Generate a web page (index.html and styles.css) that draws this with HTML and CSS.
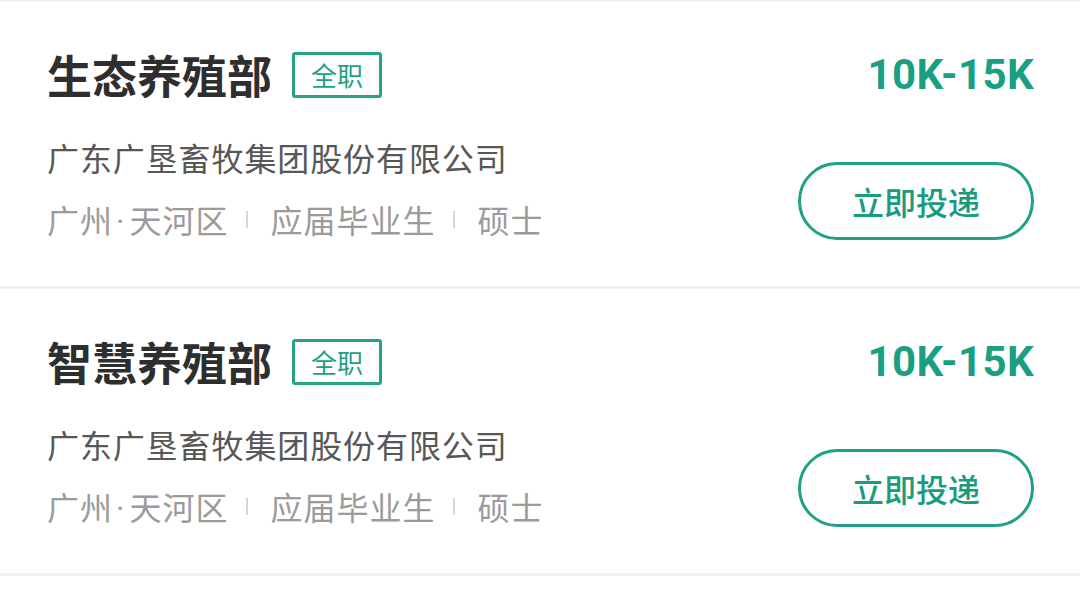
FILE: index.html
```html
<!DOCTYPE html>
<html lang="zh-CN">
<head>
    <meta charset="UTF-8">
    <title>职位列表</title>
    <link rel="stylesheet" href="styles.css">
</head>
<body>
    <!-- 职位列表 -->
    <div class="job-list">
        <div class="job-card">
            <div class="job-info">
                <div class="title-row">
                    <span class="job-title">生态养殖部</span>
                    <span class="job-tag">全职</span>
                </div>
                <p class="company">广东广垦畜牧集团股份有限公司</p>
                <p class="meta">
                    <span>广州<b class="dot">·</b>天河区</span>
                    <i class="divider"></i>
                    <span>应届毕业生</span>
                    <i class="divider"></i>
                    <span>硕士</span>
                </p>
            </div>
            <div class="job-side">
                <span class="salary">10K-15K</span>
                <button class="apply-btn">立即投递</button>
            </div>
        </div>

        <div class="job-card">
            <div class="job-info">
                <div class="title-row">
                    <span class="job-title">智慧养殖部</span>
                    <span class="job-tag">全职</span>
                </div>
                <p class="company">广东广垦畜牧集团股份有限公司</p>
                <p class="meta">
                    <span>广州<b class="dot">·</b>天河区</span>
                    <i class="divider"></i>
                    <span>应届毕业生</span>
                    <i class="divider"></i>
                    <span>硕士</span>
                </p>
            </div>
            <div class="job-side">
                <span class="salary">10K-15K</span>
                <button class="apply-btn">立即投递</button>
            </div>
        </div>
    </div>
</body>
</html>
```

FILE: styles.css
```css
body {
    margin: 0;
    background-color: #fff;
    font-family: "Noto Sans CJK SC", "Noto Sans", sans-serif;
}

/* 列表 */
.job-list {
    border-top: 2px solid #f2f2f2;
}

/* 单个职位卡片 */
.job-card {
    display: flex;
    justify-content: space-between;
    padding: 50px 46px 45px 47px;
    border-bottom: 3px solid #f1f1f1;
}

.title-row {
    display: flex;
    align-items: center;
    height: 46px;
}

.job-title {
    font-size: 45px;
    font-weight: 700;
    color: #2e2e2e;
    line-height: 46px;
}

.job-tag {
    box-sizing: border-box;
    height: 46px;
    width: 90px;
    margin-left: 20px;
    border: 3px solid #25a387;
    border-radius: 3px;
    color: #1fa084;
    font-size: 26px;
    line-height: 40px;
    text-align: center;
}

.company {
    margin: 37px 0 0;
    font-size: 32px;
    line-height: 44px;
    color: #575757;
    letter-spacing: 0.9px;
}

.meta {
    display: flex;
    align-items: center;
    height: 44px;
    margin: 18px 0 0;
    font-size: 32px;
    line-height: 44px;
    letter-spacing: 1px;
    color: #9b9b9b;
}

/* 窄的间隔点 */
.dot {
    font-family: Roboto, "Liberation Sans", sans-serif;
    font-weight: 400;
    line-height: 1;
    margin: 0 4px 0 3px;
}

.divider {
    width: 2px;
    height: 17px;
    margin: 0 22px 0 18px;
    background: #d6d6d6;
}

/* 右侧薪资和按钮 */
.job-side {
    display: flex;
    flex-direction: column;
    align-items: flex-end;
}

.salary {
    font-family: Roboto, "Liberation Sans", sans-serif;
    font-size: 42px;
    font-weight: 700;
    line-height: 46px;
    letter-spacing: 0.4px;
    color: #1a9f83;
}

.apply-btn {
    box-sizing: border-box;
    width: 236px;
    height: 78px;
    margin-top: 64px;
    border: 3px solid #20a085;
    border-radius: 39px;
    background: #fff;
    color: #1a9b80;
    font-family: "Noto Sans CJK SC", sans-serif;
    font-size: 32px;
    font-weight: 500;
}
```
